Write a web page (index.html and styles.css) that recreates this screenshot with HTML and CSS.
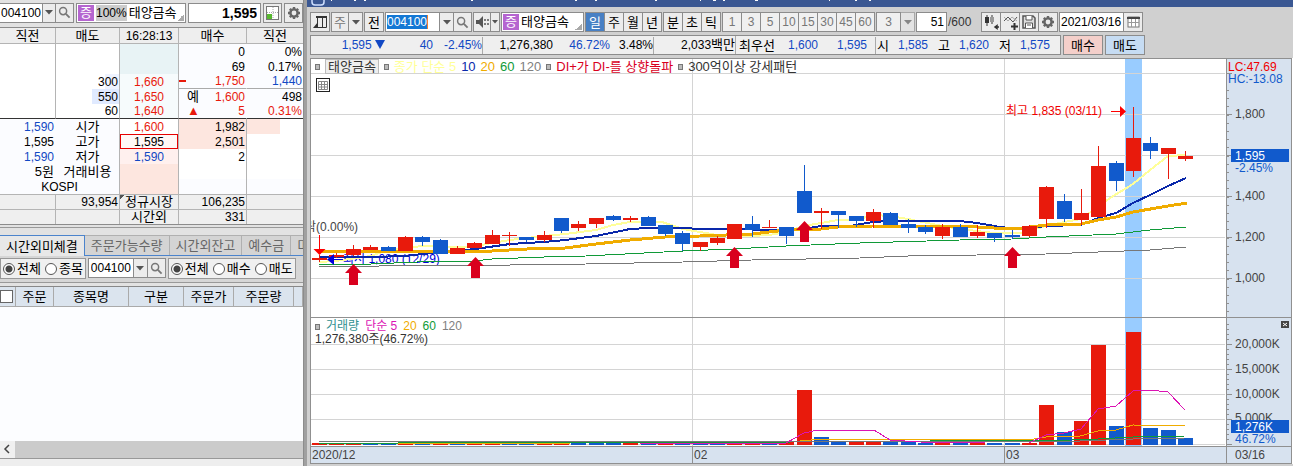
FILE: index.html
```html
<!DOCTYPE html>
<html lang="ko">
<head>
<meta charset="utf-8">
<title>태양금속 004100</title>
<link rel="stylesheet" href="styles.css">
</head>
<body>
<svg class="defs" aria-hidden="true">
  <symbol id="i-search" viewBox="0 0 14 14"><circle cx="5.5" cy="5.5" r="3.8" fill="none" stroke="#777" stroke-width="1.6"/><path d="M8.5 8.5l4 4" stroke="#777" stroke-width="2"/></symbol>
  <symbol id="i-down" viewBox="0 0 8 5"><path d="M0 0h8L4 4.5z" fill="#555"/></symbol>
  <symbol id="i-gear" viewBox="0 0 14 14"><circle cx="7" cy="7" r="3.6" fill="none" stroke="#666" stroke-width="2.4"/><path d="M7 1v2M7 11v2M1 7h2M11 7h2M2.8 2.8l1.4 1.4M9.8 9.8l1.4 1.4M11.2 2.8L9.8 4.2M4.2 9.8l-1.4 1.4" stroke="#666" stroke-width="2.4"/></symbol>
</svg>
<div class="app">
  <section class="order">
    <div class="bar order-bar">
      <div class="group">
        <input class="field code" value="004100" aria-label="종목코드">
        <button class="btn w13" aria-label="목록"><svg width="8" height="5"><use href="#i-down"/></svg></button>
        <button class="btn w19" aria-label="검색"><svg width="13" height="13"><use href="#i-search"/></svg></button>
      </div>
      <div class="stock grow"><span class="badge">증</span><span class="rate">100%</span><span class="ko">태양금속</span></div>
      <input class="field price" value="1,595" aria-label="현재가">
      <button class="btn w19" aria-label="호가"><svg width="14" height="14"><rect x=".5" y=".5" width="12" height="13" fill="#fff" stroke="#777"/><path d="M1 8h5v5H1z" fill="#58b830"/><path d="M7 1v12M1 6.500h12" stroke="#aaa" stroke-dasharray="1 1"/></svg></button>
      <button class="btn w19" aria-label="설정"><svg width="14" height="14"><use href="#i-gear"/></svg></button>
    </div>
    <table class="quote">
      <colgroup><col class="c1"><col class="c2"><col class="c3"><col class="c4"><col class="c5"></colgroup>
      <thead><tr><th>직전</th><th>매도</th><th class="num">16:28:13</th><th>매수</th><th>직전</th></tr></thead>
      <tbody>
        <tr><td></td><td></td><td class="m1"></td><td class="pale nb">0</td><td class="pale">0%</td></tr>
        <tr><td></td><td></td><td class="m1"></td><td class="pale nb">69</td><td class="pale">0.17%</td></tr>
        <tr class="under"><td></td><td class="ask-s">300</td><td class="mid up m2">1,660</td><td class="pale nb up tick">1,750</td><td class="pale down">1,440</td></tr>
        <tr><td></td><td class="ask-l">550</td><td class="mid up m2">1,650</td><td class="pale nb up"><span class="lead ko">예</span>1,600</td><td class="pale">498</td></tr>
        <tr class="last"><td></td><td>60</td><td class="mid up m2">1,640</td><td class="pale nb up"><span class="lead tri">▲</span>5</td><td class="pale up">0.31%</td></tr>
        <tr><td class="down pale nb">1,590</td><td class="mid ko pale">시가</td><td class="mid up">1,600</td><td class="bid">1,982</td><td class="bid-s"></td></tr>
        <tr><td class="pale nb">1,595</td><td class="mid ko pale">고가</td><td class="mid now">1,595</td><td class="bid">2,501</td><td></td></tr>
        <tr><td class="down pale nb">1,590</td><td class="mid ko pale">저가</td><td class="mid down m3">1,590</td><td>2</td><td></td></tr>
        <tr><td class="pale ko nb">5원</td><td class="mid ko pale">거래비용</td><td class="m4"></td><td></td><td></td></tr>
        <tr><td class="mid pale" colspan="2">KOSPI</td><td class="m4"></td><td class="pale"></td><td class="pale"></td></tr>
      </tbody>
      <tfoot>
        <tr><td></td><td>93,954</td><td class="mid ko corner">정규시장</td><td>106,235</td><td></td></tr>
        <tr><td></td><td></td><td class="mid ko">시간외</td><td>331</td><td></td></tr>
      </tfoot>
    </table>
    <div class="rule"></div>
    <nav class="tabs">
      <button class="tab on">시간외미체결</button><button class="tab">주문가능수량</button><button class="tab">시간외잔고</button><button class="tab">예수금</button><button class="tab">미</button>
    </nav>
    <div class="filters">
      <div class="box"><label><input type="radio" name="a" checked>전체</label><label><input type="radio" name="a">종목</label></div>
      <div class="group">
        <input class="field code2" value="004100" aria-label="종목">
        <button class="btn w14" aria-label="목록"><svg width="8" height="5"><use href="#i-down"/></svg></button>
        <button class="btn w19" aria-label="검색"><svg width="13" height="13"><use href="#i-search"/></svg></button>
      </div>
      <div class="box"><label><input type="radio" name="b" checked>전체</label><label><input type="radio" name="b">매수</label><label><input type="radio" name="b">매도</label></div>
    </div>
    <table class="orders">
      <thead><tr><th class="o1"><input type="checkbox" aria-label="전체 선택"></th><th class="o2">주문</th><th class="o3">종목명</th><th class="o4">구분</th><th class="o5">주문가</th><th class="o6">주문량</th><th></th></tr></thead>
    </table>
    <div class="empty"></div>
    <div class="scroll"><svg width="15" height="16"><path d="M9 4L5 8l4 4" fill="none" stroke="#444" stroke-width="1.500"/></svg><span class="thumb"></span></div>
    <div class="foot"></div>
  </section>

  <main class="chart">
    <header class="title"><svg width="620" height="7"><rect x="5" y="-7" width="12" height="12" rx="3" fill="none" stroke="#cfe0ff" stroke-width="1.500"/><path d="M24 .5h1M47 .5h2M57 .5h2M164 .5h2M268 .5h2M288 .5h2M348 .5h2M393 .5h1M406 .5h3M416 .5h2M448 .5h3M522 .5h1M548 .5h2M562 .5h2" stroke="#fff"/></svg></header>
    <div class="bar tools">
      <button class="btn w20" aria-label="패널"><svg width="15" height="14"><path d="M3 1h11v2H3z" fill="#333"/><path d="M4.500 3v9.500h9V3M9.500 3v9" fill="none" stroke="#333"/><path d="M0 13l5-6v6z" fill="#333"/></svg></button>
      <div class="group"><button class="btn w18 dim">주</button><button class="btn w14" aria-label="목록"><svg width="8" height="5"><use href="#i-down"/></svg></button></div>
      <button class="btn w20">전</button>
      <div class="group"><span class="field pick"><mark>004100</mark></span><button class="btn w14" aria-label="목록"><svg width="8" height="5"><use href="#i-down"/></svg></button><button class="btn w19" aria-label="검색"><svg width="13" height="13"><use href="#i-search"/></svg></button></div>
      <div class="group"><button class="btn w18" aria-label="소리"><svg width="13" height="12"><path d="M0 4h3l4-4v12L3 8H0z" fill="#555"/><path d="M9 3v7M12 3v7" stroke="#555" stroke-width="1.500" stroke-dasharray="2 2"/></svg></button><button class="btn w9" aria-label="소리 목록"><svg width="6" height="4" viewBox="0 0 6 4"><path d="M0 0h6L3 3.500z" fill="#555"/></svg></button></div>
      <div class="stock name"><span class="badge">증</span><span class="ko">태양금속</span></div>
      <div class="group"><button class="btn w20 on">일</button><button class="btn w20">주</button><button class="btn w20">월</button><button class="btn w20">년</button></div>
      <div class="group"><button class="btn w20">분</button><button class="btn w20">초</button><button class="btn w20">틱</button></div>
      <div class="group min"><button class="btn w20">1</button><button class="btn w20">3</button><button class="btn w20">5</button><button class="btn w20">10</button><button class="btn w20">15</button><button class="btn w20">30</button><button class="btn w20">45</button><button class="btn w20">60</button></div>
      <div class="group min"><button class="btn w25">3</button><button class="btn w14 off" aria-label="분 목록"><svg width="8" height="5"><use href="#i-down"/></svg></button></div>
      <input class="field count" value="51" aria-label="봉 개수"><span class="total">/600</span>
      <div class="group"><button class="btn w20" aria-label="봉 추가"><svg width="15" height="15"><path d="M3 0v11M8 0v9" stroke="#333"/><path d="M1 2h4v6H1z" fill="#333"/><path d="M6 2h4v5H6z" fill="#999"/><path d="M15 12h-4M13 10.500l-2 1.500 2 1.500z" stroke="#333" stroke-width="1.500" fill="#333"/></svg></button><button class="btn w20" aria-label="지표 추가"><svg width="15" height="15"><path d="M1 6l4-4 5 5 4-5" fill="none" stroke="#555"/><path d="M1 2l4 4 4-4 5 4" fill="none" stroke="#aaa"/><path d="M11.500 8v7M8 11.500h7" stroke="#333" stroke-width="2"/></svg></button><button class="btn w20" aria-label="저장"><svg width="14" height="14"><path d="M1 1h10l2 2v10H1z" fill="#ddd" stroke="#555" stroke-width="1.500"/><path d="M4 1v4h6V1M3.500 13V8h7v5M5 10h4" fill="#fff" stroke="#555"/></svg></button><button class="btn w20" aria-label="설정"><svg width="14" height="14"><use href="#i-gear"/></svg></button></div>
      <div class="group"><input class="field date" value="2021/03/16" aria-label="날짜"><button class="btn w20" aria-label="달력"><svg width="13" height="12"><rect x="1" y="1" width="11" height="10" fill="#fff" stroke="#777"/><path d="M0 2h13" stroke="#444" stroke-width="2"/><path d="M1 6.500h11M4.500 3v8M8.500 3v8" stroke="#999"/></svg></button></div>
    </div>
    <div class="bar info">
      <div class="facts">
        <span class="cell s1 down">1,595 <i class="fall"></i></span><span class="cell s2 down">40</span><span class="cell s3 down sep">-2.45%</span>
        <span class="cell s4">1,276,380</span><span class="cell s5 down">46.72%</span><span class="cell s6 sep">3.48%</span>
        <span class="cell s7 sep">2,033<span class="ko">백만</span></span>
        <span class="cell s8 ko">최우선</span><span class="cell s9 down">1,600</span><span class="cell s10 down sep">1,595</span>
        <span class="cell s11 ko">시</span><span class="cell s12 down">1,585</span><span class="cell s13 ko">고</span><span class="cell s12 down">1,620</span><span class="cell s13 ko">저</span><span class="cell s12 down">1,575</span>
      </div>
      <button class="btn trade buy">매수</button><button class="btn trade sell">매도</button>
    </div>
    <div class="plot">
      <svg class="canvas" id="canvas" viewBox="310 58 983 406" role="img" aria-label="태양금속 일봉 차트">
        <rect x="310" y="58" width="983" height="406" fill="#fff"/>
        <rect x="1227" y="59" width="65" height="405" fill="#d7e2ef"/>
        <rect x="311" y="447" width="981" height="17" fill="#d7e2ef"/>
        <rect x="1125" y="59" width="17" height="387" fill="#99ccff"/>
        <g id="grid"></g>
        <path d="M310 58.500H1292M310.500 58V464M1291.500 58V464M310 317.500H1292M310 446.500H1292M310 463.500H1292M1226.500 58V464M692.500 447V463M1004.500 447V463" fill="none" stroke="#909090"/>
        <g id="ticks"></g>
        <g class="label">
          <text x="1235" y="118">1,800</text><text x="1235" y="200">1,400</text><text x="1235" y="241">1,200</text><text x="1235" y="282">1,000</text>
          <text x="1235" y="348">20,000K</text><text x="1235" y="373">15,000K</text><text x="1235" y="398">10,000K</text><text x="1235" y="422">5,000K</text>
          <text x="312" y="459">2020/12</text><text x="694" y="459">02</text><text x="1006" y="459">03</text><text x="1235" y="459">03/16</text>
        </g>
        <rect x="1231" y="149" width="58" height="13" fill="#115acc"/><rect x="1231" y="420" width="58" height="13" fill="#115acc"/>
        <g class="label"><text class="inv" x="1235" y="160">1,595</text><text class="inv" x="1235" y="431">1,276K</text>
          <text class="blue" x="1235" y="172">-2.45%</text><text class="blue" x="1235" y="443">46.72%</text>
          <text class="red" x="1228" y="71">LC:47.69</text><text class="blue" x="1228" y="83">HC:-13.08</text></g>
        <rect x="1281" y="321" width="8" height="7" fill="#444"/><path d="M1283 323l4 3M1287 323l-4 3" stroke="#fff"/>
        <g class="label"><text x="305" y="231" clip-path="url(#edge)">락(0.00%)</text><text class="low" x="343" y="263">최저 1,080 (12/29)</text><text class="high" x="1006" y="115">최고 1,835 (03/11)</text></g>
        <clipPath id="edge"><rect x="311" y="210" width="80" height="40"/></clipPath>
        <g id="averages" fill="none" shape-rendering="crispEdges"></g>
        <g id="candles" shape-rendering="crispEdges"></g>
        <g id="volumes" shape-rendering="crispEdges"></g>
        <g id="volume-averages" fill="none" shape-rendering="crispEdges"></g>
        <g id="signals" fill="#d9001e"></g>
        <path d="M319.500 235v14M1111 111.500h10" stroke="#f00"/><path d="M313.500 249h12l-6 6zM1120 106v11l6-5.500z" fill="#f00"/>
        <path d="M343 259.500h-10" stroke="#0000dc"/><path d="M334 254v11l-7-5.500z" fill="#0000dc"/>
      </svg>
      <div class="legend top"><i class="dot"></i><span class="chip">태양금속</span><i class="dot"></i><span class="y">종가 단순 5</span><span class="b">10</span><span class="o">20</span><span class="g">60</span><span class="n">120</span><i class="dot"></i><span class="r">DI+가 DI-를 상향돌파</span><i class="dot"></i><span>300억이상 강세패턴</span></div>
      <svg class="gridicon" width="14" height="14"><rect x=".5" y=".5" width="13" height="13" fill="#fff" stroke="#222"/><path d="M2.500 3.500h9v8h-9zM2.500 6.500h9M2.500 9h9M5.500 3v8M8.500 3v8" fill="none" stroke="#888"/></svg>
      <div class="legend vol"><i class="dot"></i><span class="t">거래량</span><span class="p">단순 5</span><span class="o">20</span><span class="g">60</span><span class="n">120</span></div>
      <div class="legend amount">1,276,380주(46.72%)</div>
    </div>
  </main>
</div>
<script src="script.js"></script>
</body>
</html>
```

FILE: styles.css
```css
* { box-sizing: border-box; }
body { margin: 0; background: #d0d0d0; color: #000; font: 12px/15px "Liberation Sans", "Noto Sans CJK KR", sans-serif; }
button, input { font: inherit; color: inherit; margin: 0; padding: 0; border-radius: 0; }
svg { display: block; flex: none; }
.defs { position: absolute; width: 0; height: 0; }
.ko, th, .tab, .box { font-size: 13px; }
.app { display: flex; min-height: 100vh; overflow: hidden; }
.up { color: #e81a0c; }
.down { color: #1148c4; }

.order { flex: 0 0 304px; display: flex; flex-direction: column; overflow: hidden; border-right: 1px solid #8c8c8c; background: #e2e2e2; }
.chart { flex: 1; min-width: 0; border-left: 3px solid #a0a0a0; background: #d0d0d0; }
.bar { display: flex; align-items: center; }
.order-bar { gap: 2px; height: 28px; padding: 2px 0 4px; border-bottom: 1px solid #8c8c8c; }
.group { display: flex; }
.group > * + * { margin-left: -1px; }
.btn { display: flex; align-items: center; justify-content: center; height: 20px; border: 1px solid #8c8c8c; background: #ececec; font-size: 13px; white-space: nowrap; flex: none; }
.w9 { width: 10px; } .w13 { width: 14px; } .w14 { width: 15px; } .w18 { width: 18px; } .w19 { width: 19px; } .w20 { width: 20px; } .w25 { width: 25px; }
.field { height: 20px; border: 1px solid #8c8c8c; background: #fff; }
.code { width: 43px; border-left: 0; padding-left: 1px; }
.code2 { width: 46px; padding-left: 2px; }
.price { width: 73px; padding-right: 3px; text-align: right; font-size: 14px; font-weight: bold; }
.stock { display: flex; align-items: center; gap: 2px; height: 20px; padding-left: 1px; border: 1px solid #8c8c8c; background: linear-gradient(135deg, transparent 50%, #aaa 50%) right 1px bottom 1px / 7px 7px no-repeat #fff; line-height: 16px; white-space: nowrap; overflow: hidden; }
.grow { flex: 1; }
.name { width: 83px; }
.badge { width: 16px; height: 16px; background: #b565d0; color: #fff; font-size: 13px; text-align: center; }
.rate { height: 16px; background: #ccc; }

.quote { width: 100%; table-layout: fixed; border-collapse: separate; border-spacing: 0; background: #fff; border-bottom: 1px solid #8c8c8c; }
.c1 { width: 56px; } .c2 { width: 64px; } .c3 { width: 59px; } .c4 { width: 68px; }
.quote th, .quote td { height: 15px; padding: 0 1px; line-height: 14px; white-space: nowrap; border-right: 1px solid #b4b4b4; }
.quote th { height: 16px; background: #eee; font-weight: normal; border-bottom: 1px solid #b4b4b4; }
.quote th.num { font-size: 12px; }
.quote td { text-align: right; }
.quote th:last-child, .quote td:last-child { border-right: 0; }
.quote td.nb { border-right-color: #fbfcff; }
.quote .mid { text-align: center; }
.quote .pale { background: #fbfcff; }
.quote .m1 { background: #e8f3f5; } .quote .m2 { background: #f6fbfc; } .quote .m3 { background: #fff0ee; } .quote .m4 { background: #fde6df; }
.quote .ask-s { background: linear-gradient(#eef3ff, #eef3ff) right / 14px 100% no-repeat; }
.quote .ask-l { background: linear-gradient(#e0eaff, #e0eaff) right / 27px 100% no-repeat; }
.quote .bid { background: #fde6df; }
.quote .bid-s { background: linear-gradient(#fde6df, #fde6df) left / 33px 100% no-repeat; }
.quote .tick { background: linear-gradient(#e81a0c, #e81a0c) left center / 7px 2px no-repeat #fbfcff; }
.quote .now { box-shadow: inset 0 0 0 1px #e60000; background: #fff8f6; }
.quote .under td:nth-child(n+4) { border-bottom: 1px solid #aaa; }
.quote .last td { border-bottom: 1px solid #333; }
.quote tfoot td { background: #efefef; border-top: 1px solid #b4b4b4; }
.quote .corner { background: linear-gradient(135deg, #555 50%, transparent 50%) left top / 5px 5px no-repeat #efefef; padding: 0; }
.lead { float: left; margin-left: 7px; color: #000; }
.tri { color: #e81a0c; font-size: 13px; }

.rule { height: 8px; margin-top: 2px; border-top: 1px solid #999; }
.tabs { display: flex; height: 21px; border-bottom: 1px solid #4c84cc; }
.tab { flex: none; height: 20px; padding: 0 6px; border: 1px solid #b0b0b0; border-width: 1px 1px 0 0; background: #d4d4d4; color: #666; white-space: nowrap; }
.tab.on { height: 21px; border-color: #4c84cc; background: #e8e8e8; color: #000; }
.filters { display: flex; gap: 2px; height: 27px; padding: 2px 0 4px; background: #d6d6d6; border-bottom: 1px solid #999; }
.box { display: flex; align-items: center; gap: 4px; height: 21px; padding: 0 2px; border: 1px solid #999; background: #f0f0f0; }
.box label { display: flex; align-items: center; gap: 2px; white-space: nowrap; }
.box input { appearance: none; width: 12px; height: 12px; border: 1px solid #555; border-radius: 50%; background: #fff; }
.box input:checked { background: radial-gradient(#444 3px, #fff 4px); }
.orders { width: 100%; margin-top: 3px; table-layout: fixed; border-collapse: separate; border-spacing: 0; border-top: 1px solid #888; }
.orders th { height: 20px; padding: 0; font-weight: normal; line-height: 18px; background: #dbe4ee; border: 1px solid #aaa; border-width: 0 1px 1px 0; }
.orders input { display: block; appearance: none; width: 13px; height: 13px; border: 1px solid #666; background: #fff; }
.o1 { width: 16px; } .o2 { width: 38px; } .o3 { width: 75px; } .o4 { width: 55px; } .o5 { width: 50px; } .o6 { width: 60px; }
.empty { flex: 1; background: #fcfdff; }
.scroll { display: flex; height: 17px; background: #f0f0f0; }
.thumb { flex: 1; background: #cbcbcb; }
.foot { height: 8px; background: #eee; border-top: 1px solid #999; }

.title { height: 7px; background: #3a5792; overflow: hidden; }
.tools { gap: 1px; padding: 5px 0 3px 3px; height: 28px; }
.dim { color: #777; }
.pick { width: 55px; padding: 2px 1px; }
.pick mark { background: #1478d4; color: #fff; border-right: 1px solid #f08030; }
.btn.on { background: #4880c4; color: #fff; }
.min .btn { color: #777; font-size: 12px; background: #f0f0f0; }
.off { opacity: .6; }
.count { width: 31px; text-align: right; padding-right: 2px; }
.total { width: 32px; color: #333; }
.date { width: 65px; padding-left: 1px; }
.info { gap: 2px; height: 20px; margin-left: 3px; }
.facts { display: flex; align-items: center; flex: none; height: 20px; border: 1px solid #8c8c8c; background: #efefef; }
.cell { flex: none; text-align: right; white-space: nowrap; line-height: 17px; }
.sep { border-right: 1px solid #aaa; }
.s1 { width: 74px; } .s2 { width: 48px; } .s3 { width: 50px; } .s4 { width: 70px; } .s5 { width: 57px; } .s6 { width: 44px; } .s7 { width: 82px; } .s8 { width: 39px; } .s9 { width: 43px; } .s10 { width: 58px; } .s11 { width: 13px; } .s12 { width: 39px; } .s13 { width: 22px; }
.s10 { padding-right: 8px; }
.facts .s12:last-child { width: 49px; padding-right: 10px; }
.fall { display: inline-block; border: 5px solid transparent; border-top: 9px solid #1148c4; border-bottom: 0; }
.trade { width: 40px; }
.buy { background: #f4cfca; } .sell { background: #c6dcf3; }
.plot { position: relative; margin: 3px 0 0 3px; font-size: 12px; color: #333; }
.canvas { width: 100%; height: auto; }
.label { font-size: 12px; fill: #444; }
.label .inv { fill: #fff; } .label .blue { fill: #115acc; } .label .red, .label .high { fill: #f00000; } .label .low { fill: #0000dc; }
.legend { position: absolute; left: 5px; display: flex; align-items: center; gap: 6px; white-space: nowrap; }
.top { top: 1px; gap: 5px; font-size: 13px; } .vol { top: 261px; } .amount { top: 274px; }
.dot { width: 5px; height: 6px; border: 1px solid #777; background: #bbb; }
.chip { padding: 0 2px; border: 1px solid #bbb; background: #eee; line-height: 13px; }
.y { color: #ffff99; } .b { color: #0a28aa; } .o { color: #f0ac00; } .g { color: #109a38; } .n { color: #808080; } .r { color: #d9001e; } .t { color: #309090; } .p { color: #dc14b4; }
.gridicon { position: absolute; left: 6px; top: 20px; }
```

FILE: script.js
```js
const NS = 'http://www.w3.org/2000/svg';
const RED = '#e81a0c', BLUE = '#115acc';
function add(parent, tag, attrs) {
  const node = document.createElementNS(NS, tag);
  for (const key in attrs) node.setAttribute(key, attrs[key]);
  document.getElementById(parent).appendChild(node);
}
const centre = i => Math.floor(319 + 17.33 * i);

// Gridlines and axis ticks
[73, 114, 155, 196, 237, 278, 344, 369, 394, 419, 444].forEach(y => {
  add('grid', 'path', { d: `M311 ${y}.5H1225`, stroke: '#d4d4d4' });
  add('ticks', 'path', { d: `M1227 ${y}.5h5`, stroke: '#909090' });
});
[692, 1004].forEach(x => add('grid', 'path', { d: `M${x}.5 59V446`, stroke: '#d4d4d4' }));
for (let k = 0; k < 28; k++) add('ticks', 'path', { d: `M1227 ${Math.round(90 + k * 8.2)}.5h2`, stroke: '#909090' });
for (let k = 0; k < 25; k++) add('ticks', 'path', { d: `M1227 ${324 + k * 5}.5h2`, stroke: '#909090' });

// colour, body top, body bottom, wick top, wick bottom
const candles = [
  ['r',258,260,255,262],['r',255,257,253,258],['r',249,255,245,256],['r',247,250,245,250],['b',247,251,246,251],
  ['r',237,251,236,251],['b',237,242,236,246],['b',240,254,239,254],['r',248,254,246,254],['r',243,248,242,248],
  ['r',235,244,230,244],['r',235,236,232,246],['b',237,240,237,242],['r',235,240,231,242],['b',218,231,218,233],
  ['r',224,228,221,231],['r',218,224,218,228],['b',216,220,215,221],['r',218,220,216,222],['b',217,226,216,226],
  ['b',225,234,225,236],['b',233,244,231,251],['r',242,247,242,251],['r',238,243,236,245],['r',224,239,224,239],
  ['b',224,230,216,237],['r',227,228,220,228],['b',227,236,227,244],['b',191,213,165,213],['r',211,213,208,229],
  ['b',211,215,211,228],['b',216,221,216,227],['r',212,221,209,228],['b',213,225,212,225],['b',224,228,219,233],
  ['b',227,232,225,234],['r',227,236,224,239],['b',227,237,224,237],['r',232,236,225,238],['b',233,238,233,242],
  ['b',235,237,230,239],['r',226,236,225,237],['r',187,219,186,228],['b',201,219,194,222],['r',213,220,189,225],
  ['r',166,217,146,217],['b',163,181,161,191],['r',138,171,107,177],['b',143,151,137,159],['r',148,154,148,179],
  ['r',156,159,151,161]];
candles.forEach(([c, top, bottom, high, low], i) => {
  const fill = c === 'r' ? RED : BLUE, x = centre(i);
  add('candles', 'rect', { x, y: high, width: 1, height: low - high, fill });
  add('candles', 'rect', { x: x - 7, y: top, width: 15, height: bottom - top, fill });
});

const volumeColours = 'rrrbbrbrbrrbbrrbbbrbrbbbrrbrrbbrrbbbrbrbbrrbrrbrbbb';
const volumeTops = { 5: 441, 10: 441, 25: 441, 27: 441, 28: 390, 29: 437, 30: 441, 31: 441, 32: 441, 33: 441, 34: 441, 42: 405, 43: 432, 44: 421, 45: 345, 46: 426, 47: 332, 48: 428, 49: 430, 50: 438 };
[...volumeColours].forEach((c, i) => {
  const y = volumeTops[i] || 443;
  add('volumes', 'rect', { x: centre(i) - 7, y, width: 15, height: 445 - y, fill: c === 'r' ? RED : BLUE });
});

const line = (id, stroke, width, points) => add(id, 'polyline', { points, stroke, 'stroke-width': width });
line('averages', '#ffff99', 2, '319,262 336,261 371,256 388,250 405,248 423,246 470,247 492,243 510,240 544,236 565,234 596,230 613,225 630,222 662,222 683,229 717,235 752,236 769,235 786,232 804,226 838,220 856,220 873,215 890,216 908,219 942,226 960,229 977,231 994,233 1020,233 1046,226 1064,222 1081,219 1098,207 1110,198 1133,184 1150,170 1168,156 1186,155');
line('averages', '#777', 1, '319,266 379,266 510,265 586,264 683,262 752,260 860,258 908,256 977,255 1046,254 1098,252 1150,250 1186,247');
line('averages', '#109a38', 1, '319,264 371,264 440,261 475,261 492,259 544,257 586,256 683,251 734,249 786,246 860,243 960,240 1012,239 1046,237 1116,234 1150,230 1186,227');
line('averages', '#0a28aa', 2, '319,257 371,257 405,256 423,254 475,249 510,244 544,242 565,240 596,236 630,229 648,228 734,229 769,230 786,231 804,229 821,226 850,226 873,222 890,221 960,221 977,223 1000,227 1020,229 1046,226 1081,225 1098,218 1116,213 1133,203 1150,195 1168,186 1186,178');
line('averages', '#f0ac00', 3, '319,251 492,251 527,249 565,248 596,244 630,240 665,237 700,236 752,234 786,230 821,229 838,227 873,226 960,226 994,228 1022,228 1046,225 1081,224 1098,220 1116,217 1133,212 1168,206 1187,203');
line('volume-averages', '#f0ac00', 1, '395,443 570,443 790,442 821,439 1034,439 1046,437 1080,436 1098,431 1116,430 1133,425 1185,426');
line('volume-averages', '#109a38', 1, '319,443 398,443 790,442 1072,440 1098,439 1133,437 1185,436');
line('volume-averages', '#777', 1, '319,442 1080,441 1133,439 1185,438');
line('volume-averages', '#dc14b4', 1, '640,443 786,443 804,433 818,430 874,430 890,440 920,442 985,443 1029,443 1046,435 1064,433 1081,429 1098,409 1116,406 1133,391 1150,390 1168,392 1185,410');

[[353, 264], [475, 257], [734, 247], [804, 221], [1012, 247]].forEach(([x, y]) =>
  add('signals', 'path', { d: `M${x}.5 ${y}l8.500 9h-4v12h-9v-12h-4z` }));
```
